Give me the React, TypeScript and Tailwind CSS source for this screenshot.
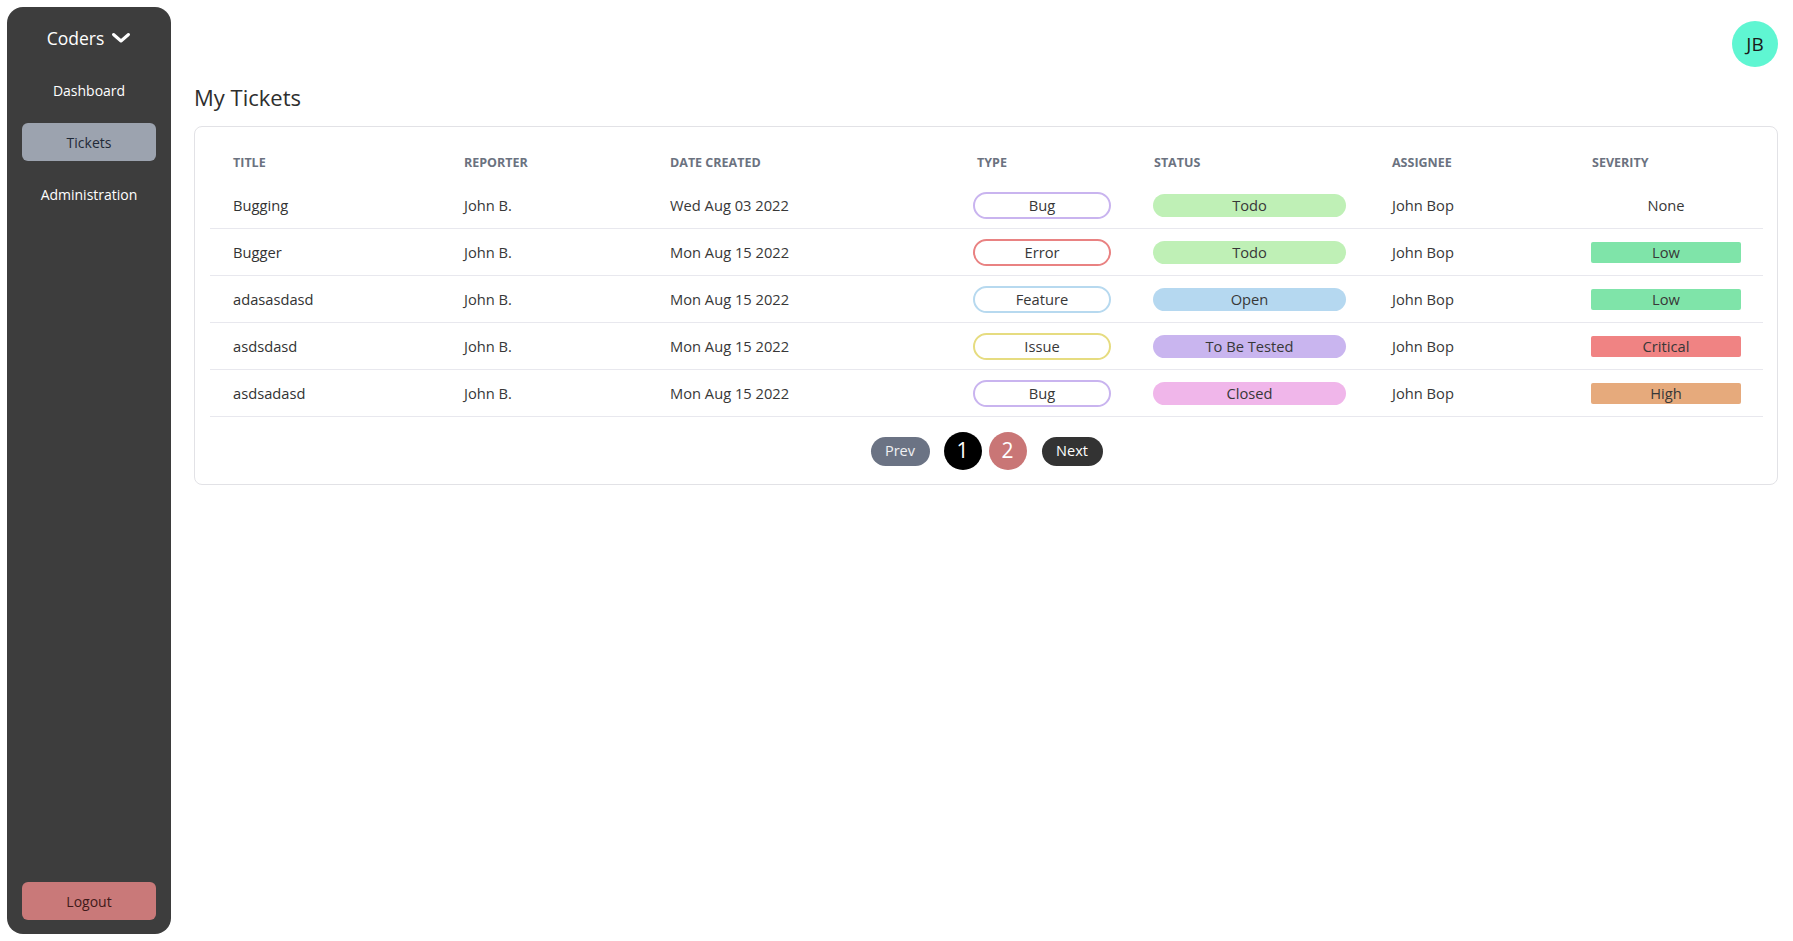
import React from 'react';

type Ticket = {
  title: string;
  reporter: string;
  created: string;
  type: 'Bug' | 'Error' | 'Feature' | 'Issue';
  status: 'Todo' | 'Open' | 'To Be Tested' | 'Closed';
  assignee: string;
  severity: 'None' | 'Low' | 'Critical' | 'High';
};

const tickets: Ticket[] = [
  { title: 'Bugging', reporter: 'John B.', created: 'Wed Aug 03 2022', type: 'Bug', status: 'Todo', assignee: 'John Bop', severity: 'None' },
  { title: 'Bugger', reporter: 'John B.', created: 'Mon Aug 15 2022', type: 'Error', status: 'Todo', assignee: 'John Bop', severity: 'Low' },
  { title: 'adasasdasd', reporter: 'John B.', created: 'Mon Aug 15 2022', type: 'Feature', status: 'Open', assignee: 'John Bop', severity: 'Low' },
  { title: 'asdsdasd', reporter: 'John B.', created: 'Mon Aug 15 2022', type: 'Issue', status: 'To Be Tested', assignee: 'John Bop', severity: 'Critical' },
  { title: 'asdsadasd', reporter: 'John B.', created: 'Mon Aug 15 2022', type: 'Bug', status: 'Closed', assignee: 'John Bop', severity: 'High' },
];

const typeBorder: Record<Ticket['type'], string> = {
  Bug: 'border-[#c9b4ef]',
  Error: 'border-[#e98282]',
  Feature: 'border-[#b7d9ef]',
  Issue: 'border-[#e6dc80]',
};

const statusBg: Record<Ticket['status'], string> = {
  Todo: 'bg-[#bff0b6]',
  Open: 'bg-[#b5d8f0]',
  'To Be Tested': 'bg-[#c9b5ef]',
  Closed: 'bg-[#f0b6ea]',
};

const severityBg: Record<Ticket['severity'], string> = {
  None: '',
  Low: 'bg-[#7fe4a9]',
  Critical: 'bg-[#f08383]',
  High: 'bg-[#e6aa7c]',
};

const cols = 'grid grid-cols-[231fr_206fr_307fr_177fr_238fr_200fr_194fr]';

function Sidebar() {
  return (
    <aside className="w-[164px] shrink-0 bg-[#3d3d3d] rounded-2xl flex flex-col px-[15px] pt-[19px] pb-[14px] text-white">
      <div className="flex items-center justify-center gap-[7px] h-[24px] text-[17.5px]">
        <span>Coders</span>
        <svg width="20" height="12" viewBox="0 0 20 12" fill="none" stroke="currentColor" strokeWidth="3" strokeLinecap="round" strokeLinejoin="round">
          <path d="M2.5 2.5 L10 9 L17.5 2.5" />
        </svg>
      </div>
      <nav className="mt-[21px] flex flex-col gap-[14px] text-[14px]">
        <a className="h-[38px] flex items-center justify-center rounded-md">Dashboard</a>
        <a className="h-[38px] flex items-center justify-center rounded-md bg-[#9ca3af] text-[#1f2937]">Tickets</a>
        <a className="h-[38px] flex items-center justify-center rounded-md">Administration</a>
      </nav>
      <button className="mt-auto h-[38px] rounded-md bg-[#c97979] text-[#3f1a1a] text-[14px]">Logout</button>
    </aside>
  );
}

function TicketRow({ t }: { t: Ticket }) {
  return (
    <div className={`${cols} h-[47px] items-center border-b border-[#e8e8ee] text-[14.7px] text-[#383838]`}>
      <div className="pl-[23px] font-medium text-[#333]">{t.title}</div>
      <div className="pl-[23px]">{t.reporter}</div>
      <div className="pl-[23px]">{t.created}</div>
      <div className="pl-[19px]">
        <div className={`w-[138px] h-[27px] rounded-full border-[2.5px] ${typeBorder[t.type]} flex items-center justify-center`}>
          {t.type}
        </div>
      </div>
      <div className="pl-[22px]">
        <div className={`w-[193px] h-[23px] rounded-full ${statusBg[t.status]} flex items-center justify-center`}>
          {t.status}
        </div>
      </div>
      <div className="pl-[23px]">{t.assignee}</div>
      <div className="pl-[22px]">
        <div className={`w-[150px] h-[21px] rounded-[2px] ${severityBg[t.severity]} flex items-center justify-center`}>
          {t.severity}
        </div>
      </div>
    </div>
  );
}

export default function App() {
  return (
    <div className="h-screen w-full flex bg-white p-[7px] font-['Open_Sans',sans-serif]">
      <Sidebar />
      <main className="flex-1 flex flex-col pl-[23px] pr-[8px]">
        <div className="flex justify-end pt-[14px]">
          <div className="w-[46px] h-[46px] rounded-full bg-[#5ff6d2] flex items-center justify-center text-[19px] text-[#1a1a1a]">
            JB
          </div>
        </div>
        <h2 className="mt-[14px] text-[22px] leading-[32px] font-medium text-[#2e2e2e]">My Tickets</h2>
        <section className="mt-[13px] border border-[#e2e2e6] rounded-lg pl-[15px] pr-[14px] pb-[14px]">
          <div className={`${cols} pt-[28px] pb-[11px] text-[12.5px] leading-4 font-bold text-[#6b7280] uppercase`}>
            <div className="pl-[23px]">Title</div>
            <div className="pl-[23px]">Reporter</div>
            <div className="pl-[23px]">Date Created</div>
            <div className="pl-[23px]">Type</div>
            <div className="pl-[23px]">Status</div>
            <div className="pl-[23px]">Assignee</div>
            <div className="pl-[23px]">Severity</div>
          </div>
          {tickets.map((t) => (
            <TicketRow key={t.title} t={t} />
          ))}
          <div className="mt-[15px] flex items-center justify-center">
            <button className="h-[29px] w-[59px] rounded-full bg-[#6b7384] text-white/90 text-[14.5px]">Prev</button>
            <button className="ml-[14px] w-[38px] h-[38px] rounded-full bg-black text-white text-[21px]">1</button>
            <button className="ml-[7px] w-[38px] h-[38px] rounded-full bg-[#c97676] text-white text-[21px]">2</button>
            <button className="ml-[15px] h-[29px] w-[61px] rounded-full bg-[#333333] text-white text-[14.5px]">Next</button>
          </div>
        </section>
      </main>
    </div>
  );
}
